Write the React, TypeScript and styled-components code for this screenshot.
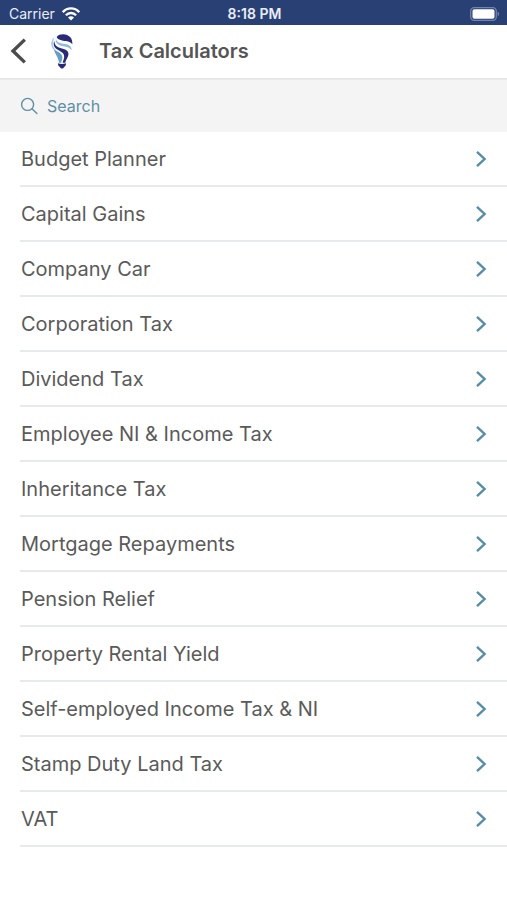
import React from "react";
import styled, { createGlobalStyle } from "styled-components";

const GlobalStyle = createGlobalStyle`
  *, *::before, *::after { box-sizing: border-box; }
  body {
    margin: 0;
    background: #fff;
    color: #555;
    font-family: Inter, "Liberation Sans", sans-serif;
  }
`;

const Screen = styled.div`
  display: flex;
  flex-direction: column;
  min-height: 100vh;
  background: #fff;
`;

const StatusBar = styled.div`
  display: grid;
  grid-template-columns: 1fr auto 1fr;
  align-items: center;
  height: 25px;
  padding: 2px 7px 0 9px;
  background: #294075;
  color: #e9edf7;
  font-size: 14px;
  line-height: 20px;
`;

const Carrier = styled.div`
  display: flex;
  align-items: center;
  gap: 7px;
`;

const Clock = styled.time`
  font-size: 14px;
  font-weight: 600;
`;

const BatterySlot = styled.div`
  display: flex;
  justify-content: flex-end;
`;

const Header = styled.header`
  display: flex;
  align-items: center;
  height: 55px;
  padding: 0 8px 2px;
  border-bottom: 2px solid #e8e8e8;
`;

const BackButton = styled.button`
  display: flex;
  align-items: center;
  width: 42px;
  height: 44px;
  padding: 0;
  border: 0;
  background: none;
  color: #4c4c4c;
  cursor: pointer;
`;

const LogoSlot = styled.div`
  display: flex;
  width: 49px;
`;

const Title = styled.h1`
  margin: 0;
  font-size: 20px;
  line-height: 28px;
  font-weight: 600;
`;

const SearchBar = styled.label`
  display: flex;
  align-items: center;
  gap: 9px;
  height: 52px;
  padding: 0 20px;
  background: #f4f4f4;
  color: #5f8fa5;
`;

const SearchInput = styled.input`
  flex: 1;
  min-width: 0;
  padding: 0;
  border: 0;
  outline: 0;
  background: transparent;
  color: #5f8fa5;
  font-family: inherit;
  font-size: 16px;
  line-height: 24px;

  &::placeholder {
    color: #5f8fa5;
    opacity: 1;
  }
`;

const List = styled.ul`
  margin: 0;
  padding: 0 0 0 20px;
  list-style: none;
`;

const Row = styled.a`
  display: flex;
  align-items: center;
  justify-content: space-between;
  height: 55px;
  padding: 0 20px 0 1px;
  border-bottom: 2px solid #e8e9eb;
  color: #5a5a5a;
  font-size: 20px;
  line-height: 28px;
  text-decoration: none;
`;

const calculators = [
  "Budget Planner",
  "Capital Gains",
  "Company Car",
  "Corporation Tax",
  "Dividend Tax",
  "Employee NI & Income Tax",
  "Inheritance Tax",
  "Mortgage Repayments",
  "Pension Relief",
  "Property Rental Yield",
  "Self-employed Income Tax & NI",
  "Stamp Duty Land Tax",
  "VAT",
];

const WifiIcon = () => (
  <svg width="18" height="14" viewBox="0 0 18 14" fill="none" stroke="#fff" strokeWidth="2.3" aria-hidden="true">
    <path d="M0.8 5.2C5.2 0.2 12.8 0.2 17.2 5.2" />
    <path d="M3.9 8.3C6.7 5.2 11.3 5.2 14.1 8.3" />
    <path d="M9 13.6L6 10.5C7.7 8.8 10.3 8.8 12 10.5Z" fill="#fff" stroke="none" />
  </svg>
);

const BatteryIcon = () => (
  <svg width="30" height="14" viewBox="0 0 30 14" aria-hidden="true">
    <rect x="0.7" y="0.7" width="25.6" height="12.6" rx="3.5" fill="none" stroke="#7383b0" strokeWidth="1.3" />
    <rect x="2.5" y="2.2" width="22" height="9.6" rx="1.8" fill="#fff" />
    <path d="M27.7 4.8C29.6 5.4 29.6 8.6 27.7 9.2Z" fill="#7383b0" />
  </svg>
);

const BackIcon = () => (
  <svg width="20" height="26" viewBox="0 0 20 26" fill="none" stroke="currentColor" strokeWidth="3.4" aria-hidden="true">
    <path d="M16.8 1.6L5 13L16.8 24.4" />
  </svg>
);

const BulbLogo = () => (
  <svg width="24" height="36" viewBox="150 100 72 108" role="img" aria-label="Light bulb logo">
    <path d="M170 112C174 106 181 104 189 104C207 104 219 117 217 134C210 124 200 125 189 123C178 121 171 117 170 112Z" fill="#292b78" />
    <path d="M164 113C152 120 151 137 159 148C163 153 169 155 174 160C169 151 159 146 159 133C159 124 162 118 164 113Z" fill="#a9cbe3" />
    <path d="M168 117C170 132 188 131 200 134C209 136 215 142 215 152C207 141 197 142 186 139C173 136 164 127 168 117Z" fill="#8dbbd9" />
    <path d="M163 123C163 141 178 144 191 148C204 152 208 160 204 170C201 178 197 182 196 189L188 189C190 181 194 175 192 167C190 158 179 155 171 149C161 142 159 132 163 123Z" fill="#292b78" />
    <path d="M162 151C174 155 187 162 187 173C187 180 184 184 184 189L177 189C176 175 167 167 162 151Z" fill="#649fc5" />
    <path d="M174 191C181 194 190 194 198 191C198 198 196 201 192 202C190 208 182 208 180 202C176 201 174 198 174 191Z" fill="#292b78" />
  </svg>
);

const SearchIcon = () => (
  <svg width="18" height="18" viewBox="0 0 18 18" fill="none" stroke="currentColor" strokeWidth="1.4" strokeLinecap="round" aria-hidden="true">
    <circle cx="7.6" cy="7.4" r="6" />
    <path d="M12 11.8L16.9 16.6" />
  </svg>
);

const ChevronIcon = () => (
  <svg width="12" height="18" viewBox="0 0 12 18" fill="none" stroke="#558da9" strokeWidth="2.4" aria-hidden="true">
    <path d="M2 1.8L9.6 9L2 16.2" />
  </svg>
);

export default function App() {
  return (
    <Screen>
      <GlobalStyle />
      <StatusBar>
        <Carrier>
          <span>Carrier</span>
          <WifiIcon />
        </Carrier>
        <Clock>8:18 PM</Clock>
        <BatterySlot>
          <BatteryIcon />
        </BatterySlot>
      </StatusBar>
      <Header>
        <BackButton type="button" aria-label="Back">
          <BackIcon />
        </BackButton>
        <LogoSlot>
          <BulbLogo />
        </LogoSlot>
        <Title>Tax Calculators</Title>
      </Header>
      <main>
        <SearchBar>
          <SearchIcon />
          <SearchInput type="text" placeholder="Search" aria-label="Search" />
        </SearchBar>
        <List>
          {calculators.map((name) => (
            <li key={name}>
              <Row href="#">
                <span>{name}</span>
                <ChevronIcon />
              </Row>
            </li>
          ))}
        </List>
      </main>
    </Screen>
  );
}
